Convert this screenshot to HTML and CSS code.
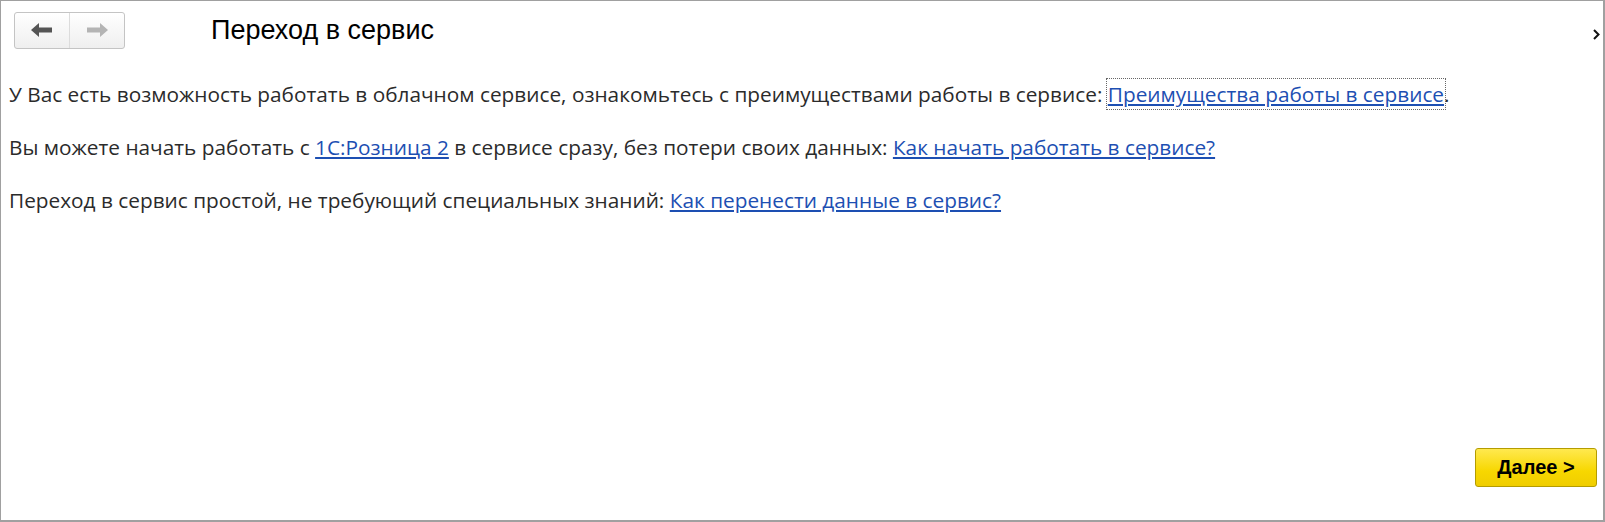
FILE: index.html
```html
<!DOCTYPE html>
<html lang="ru">
<head>
  <meta charset="UTF-8">
  <title>Переход в сервис</title>
  <link rel="stylesheet" href="styles.css">
</head>
<body>

<div class="window">
  <div class="header">
    <div class="nav">
      <button class="nav-btn back" title="Назад">
        <svg width="22" height="14" viewBox="0 0 22 14"><path d="M0 7 L8 0 V4.5 H21 V9.5 H8 V14 Z" fill="#555"/></svg>
      </button>
      <button class="nav-btn fwd" title="Вперед">
        <svg width="22" height="14" viewBox="0 0 22 14"><path d="M22 7 L14 0 V4.5 H1 V9.5 H14 V14 Z" fill="#b4b4b4"/></svg>
      </button>
    </div>
    <h1 class="title">Переход в сервис</h1>
    <svg class="more" width="7" height="11" viewBox="0 0 7 11"><path d="M1 1 L5.5 5.5 L1 10" fill="none" stroke="#111" stroke-width="2"/></svg>
  </div>

  <div class="content">
    <p>У Вас есть возможность работать в облачном сервисе, ознакомьтесь с преимуществами работы в сервисе: <a href="#" class="focused">Преимущества работы в сервисе</a>.</p>
    <p>Вы можете начать работать с <a href="#">1С:Розница 2</a> в сервисе сразу, без потери своих данных: <a href="#">Как начать работать в сервисе?</a></p>
    <p>Переход в сервис простой, не требующий специальных знаний: <a href="#">Как перенести данные в сервис?</a></p>
  </div>

  <div class="footer">
    <button class="btn-next">Далее &gt;</button>
  </div>
</div>

</body>
</html>
```

FILE: styles.css
```css
html, body {
  margin: 0;
  padding: 0;
  background: #fff;
}

.window {
  box-sizing: border-box;
  width: 1605px;
  height: 522px;
  border: 1px solid #a0a0a0;
  border-right-width: 2px;
  border-bottom-width: 2px;
  display: flex;
  flex-direction: column;
  font-family: "Open Sans", "Noto Sans", sans-serif;
}

.header {
  display: flex;
  align-items: center;
  padding: 10px 0 0 13px;
  height: 38px;
  position: relative;
}

.nav {
  display: flex;
  width: 111px;
  height: 37px;
  box-sizing: border-box;
  border: 1px solid #c4c4c4;
  border-radius: 3px;
  background: linear-gradient(#ffffff, #efefef);
  overflow: hidden;
}

.nav-btn {
  flex: 1;
  border: none;
  background: transparent;
  padding: 0;
  display: flex;
  align-items: center;
  justify-content: center;
  cursor: pointer;
}

.nav-btn.back {
  border-right: 1px solid #dcdcdc;
}

.title {
  margin: 0 0 0 86px;
  font-family: "Liberation Sans", Arial, sans-serif;
  font-weight: normal;
  font-size: 27px;
  color: #000;
}

.more {
  position: absolute;
  right: 3px;
  top: 28px;
}

.content {
  padding: 29px 0 0 8px;
}

.content p {
  margin: 0 0 20px;
  font-size: 20.8px;
  line-height: 33px;
  color: #2b2b2b;
}

.content a {
  color: #1d4fb2;
  text-decoration: underline;
}

.content a.focused {
  outline: 1px dotted #666;
  outline-offset: 1px;
}

.footer {
  margin-top: auto;
  display: flex;
  justify-content: flex-end;
  padding: 0 6px 33px 0;
}

.btn-next {
  width: 122px;
  height: 39px;
  border: 1px solid #b49c00;
  border-radius: 3px;
  background: linear-gradient(#ffe94f, #f7d700 60%, #f0cd00);
  font-family: "Liberation Sans", Arial, sans-serif;
  font-weight: bold;
  font-size: 20px;
  color: #000;
  cursor: pointer;
}
```
